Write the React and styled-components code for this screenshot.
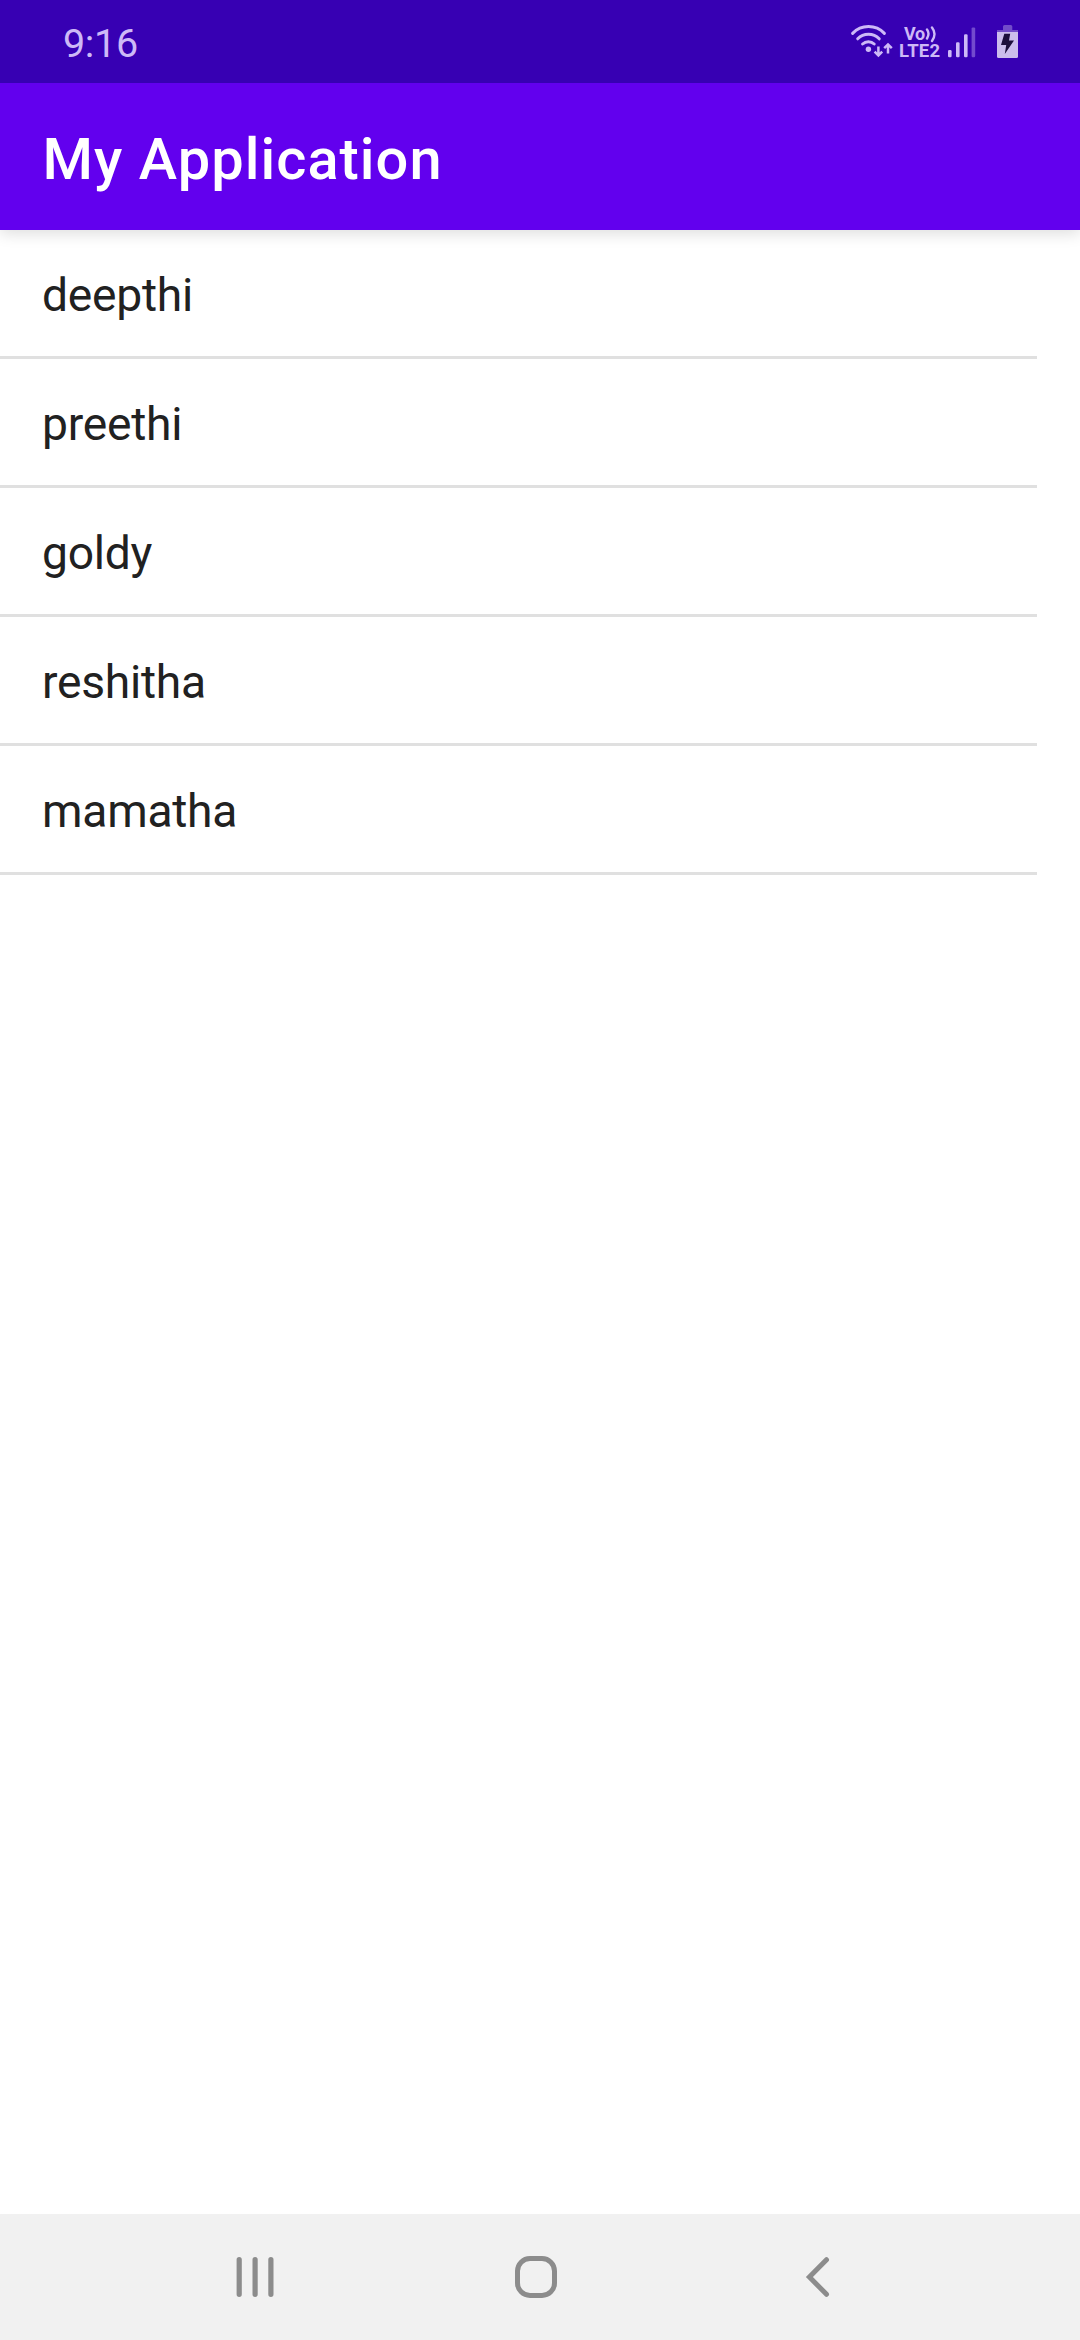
import React from "react";
import styled, { createGlobalStyle } from "styled-components";

const GlobalStyle = createGlobalStyle`
  * { box-sizing: border-box; }
  body { margin: 0; background: #ffffff; }
`;

const Screen = styled.div`
  display: flex;
  flex-direction: column;
  width: 1080px;
  height: 2340px;
  background: #ffffff;
  font-family: Roboto, "Noto Sans", sans-serif;
`;

const StatusBar = styled.header`
  display: flex;
  align-items: flex-start;
  justify-content: space-between;
  position: relative;
  z-index: 1;
  height: 83px;
  padding: 0 61px 0 63px;
  background: #3700b3;
  color: #cdb9f7;
`;

const Clock = styled.time`
  padding-top: 20px;
  font-size: 39.5px;
  line-height: 47px;
  letter-spacing: -0.35px;
`;

const StatusIcons = styled.div`
  display: flex;
  height: 83px;
`;

const StatusGlyph = styled.svg`
  display: block;
  flex: none;
  width: ${({ $width }) => $width}px;
  height: 83px;
`;

const Network = styled.div`
  display: flex;
  flex-direction: column;
  width: 45px;
  padding-top: 25px;
  font-weight: 700;
  line-height: 17px;
`;

const NetworkLine = styled.div`
  display: flex;
  height: 18px;
  padding-left: ${({ $indent }) => $indent}px;
  font-size: ${({ $size }) => $size}px;
  letter-spacing: ${({ $tracking }) => $tracking}px;
`;

const VoiceWaves = styled.svg`
  display: block;
  width: 13px;
  height: 18px;
`;

const AppBar = styled.div`
  display: flex;
  align-items: center;
  height: 147px;
  padding: 4px 42.5px 0;
  background: #6200ee;
  box-shadow: 0 4px 14px rgba(0, 0, 0, 0.13);
`;

const Title = styled.h1`
  margin: 0;
  color: #ffffff;
  font-size: 57.75px;
  font-weight: 500;
  line-height: 68px;
  letter-spacing: 1.05px;
`;

const List = styled.ul`
  flex: 1;
  margin: 0;
  padding: 0;
  width: 1037px;
  list-style: none;
`;

const ListItem = styled.li`
  display: flex;
  align-items: center;
  height: 129px;
  padding: 3px 42px 0;
  border-bottom: 3px solid #e0e0e0;
  color: #212121;
  font-size: 46.2px;
  line-height: 54px;
  letter-spacing: -0.25px;
`;

const NavBar = styled.nav`
  display: flex;
  height: 126px;
  padding-left: 115px;
  background: #f1f1f1;
`;

const NavButton = styled.button`
  display: flex;
  align-items: center;
  justify-content: center;
  width: 281px;
  height: 126px;
  padding: 0;
  border: 0;
  background: none;
  color: #8c8c8c;
`;

const NavIcon = styled.svg`
  display: block;
  width: 49px;
  height: 50px;
`;

const names = ["deepthi", "preethi", "goldy", "reshitha", "mamatha"];

function Wifi() {
  return (
    <StatusGlyph $width={50} viewBox="849 0 50 83" fill="none" stroke="currentColor" strokeWidth="3" strokeLinecap="round" aria-label="Wi-Fi">
      <path d="M852.6 33.4A22 22 0 0 1 884.4 33.4" />
      <path d="M857.7 38.8A15 15 0 0 1 879.2 38.8" />
      <path d="M862.6 44A8.5 8.5 0 0 1 874.2 44" />
      <circle cx="868.4" cy="49.3" r="2.7" fill="currentColor" stroke="none" />
      <path strokeWidth="2.5" strokeLinecap="butt" d="M878.4 46.5V55.5M874.6 51.6L878.4 55.4L882.2 51.6M888 53.5V44.4M884.2 48.2L888 44.4L891.8 48.2" />
    </StatusGlyph>
  );
}

function Signal() {
  return (
    <StatusGlyph $width={47} viewBox="944 0 47 83" fill="currentColor" aria-label="Signal">
      <rect x="948" y="50" width="3.6" height="7.2" rx="1.2" />
      <rect x="956" y="42.2" width="3.6" height="15" rx="1.2" />
      <rect x="964" y="34.2" width="3.6" height="23" rx="1.2" />
      <rect x="971.6" y="27.4" width="3.6" height="29.8" rx="1.2" opacity="0.4" />
    </StatusGlyph>
  );
}

function Battery() {
  return (
    <StatusGlyph $width={28} viewBox="991 0 28 83" fill="#cbbdec" aria-label="Battery charging">
      <path opacity="0.4" d="M1003 30V26.5Q1003 25 1004.5 25H1010.8Q1012.3 25 1012.3 26.5V30H1018V32H997V30Z" />
      <path d="M997 32H1018V56.5Q1018 58 1016.5 58H998.5Q997 58 997 56.5Z" />
      <path fill="#1c0f3c" d="M1004.3 33.7H1010.2L1009 40.5H1014L1004.8 54L1006.2 45H1001Z" />
    </StatusGlyph>
  );
}

export default function App() {
  return (
    <Screen>
      <GlobalStyle />
      <StatusBar>
        <Clock>9:16</Clock>
        <StatusIcons>
          <Wifi />
          <Network>
            <NetworkLine $indent={5} $size={18} $tracking={-0.4}>
              Vo
              <VoiceWaves viewBox="0 0 13 18" fill="none" stroke="currentColor" strokeWidth="2.4" strokeLinecap="round">
                <path d="M2 4.5Q5 8.7 2 13.5M7 2.5Q12 9 7 16" />
              </VoiceWaves>
            </NetworkLine>
            <NetworkLine $indent={0} $size={18.5} $tracking={0.2}>LTE2</NetworkLine>
          </Network>
          <Signal />
          <Battery />
        </StatusIcons>
      </StatusBar>
      <AppBar>
        <Title>My Application</Title>
      </AppBar>
      <List>
        {names.map((name) => (
          <ListItem key={name}>{name}</ListItem>
        ))}
      </List>
      <NavBar>
        <NavButton aria-label="Recents">
          <NavIcon viewBox="231 2252 49 50" stroke="currentColor" strokeWidth="5.2" strokeLinecap="round">
            <path d="M239.2 2259.5V2294.3M255.1 2259.5V2294.3M270.9 2259.5V2294.3" />
          </NavIcon>
        </NavButton>
        <NavButton aria-label="Home">
          <NavIcon viewBox="512 2252 49 50" fill="none" stroke="currentColor" strokeWidth="5">
            <rect x="517.5" y="2258.5" width="37" height="37" rx="12.5" />
          </NavIcon>
        </NavButton>
        <NavButton aria-label="Back">
          <NavIcon viewBox="793 2252 49 50" fill="none" stroke="currentColor" strokeWidth="5" strokeLinecap="round">
            <path d="M826.5 2259.7L809.4 2277L826.5 2294.3" />
          </NavIcon>
        </NavButton>
      </NavBar>
    </Screen>
  );
}
